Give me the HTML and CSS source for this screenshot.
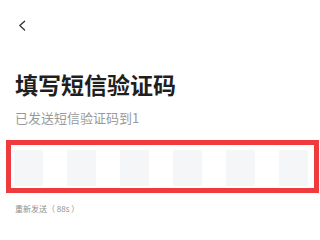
FILE: index.html
```html
<!DOCTYPE html>
<html lang="zh">
<head>
<meta charset="utf-8">
<title>填写短信验证码</title>
<link rel="stylesheet" href="styles.css">
</head>
<body>
<div class="page">
  <div class="nav">
    <svg class="back" width="12" height="12" viewBox="0 0 12 12" aria-label="返回">
      <path d="M8.6 1.2 L3.8 5.6 L8.6 10" fill="none" stroke="#333" stroke-width="1.3" stroke-linecap="round" stroke-linejoin="round"/>
    </svg>
  </div>
  <h1 class="title">填写短信验证码</h1>
  <p class="sub">已发送短信验证码到1</p>
  <div class="code-box">
    <div class="cell"></div>
    <div class="cell"></div>
    <div class="cell"></div>
    <div class="cell"></div>
    <div class="cell"></div>
    <div class="cell"></div>
  </div>
  <p class="resend">重新发送（ 88s ）</p>
</div>
</body>
</html>
```
FILE: styles.css
```css
html, body {
  margin: 0;
  padding: 0;
  background: #ffffff;
}
body {
  font-family: "Noto Sans CJK SC", "Noto Sans", sans-serif;
  width: 320px;
  height: 221px;
  overflow: hidden;
}
.page {
  display: flex;
  flex-direction: column;
}
.nav {
  padding: 20px 0 0 16px;
  height: 12px;
}
.back {
  display: block;
}
.title {
  margin: 41px 0 0 0;
  padding-left: 15px;
  font-size: 23px;
  line-height: 23px;
  font-weight: 700;
  color: #1f1f1f;
}
.sub {
  margin: 15px 0 0 0;
  padding-left: 15px;
  font-size: 13px;
  line-height: 13px;
  color: #9a9a9a;
}
.code-box {
  margin: 16px 1px 0 6px;
  height: 53px;
  box-sizing: border-box;
  border: 5px solid #ef3a3e;
  padding: 5px 0 2px 3px;
  display: flex;
  gap: 24px;
}
.cell {
  width: 29px;
  height: 36px;
  background: #f5f6f8;
}
.resend {
  margin: 12px 0 0 0;
  padding-left: 15px;
  font-size: 8px;
  line-height: 8px;
  color: #8f8f8f;
}
```
